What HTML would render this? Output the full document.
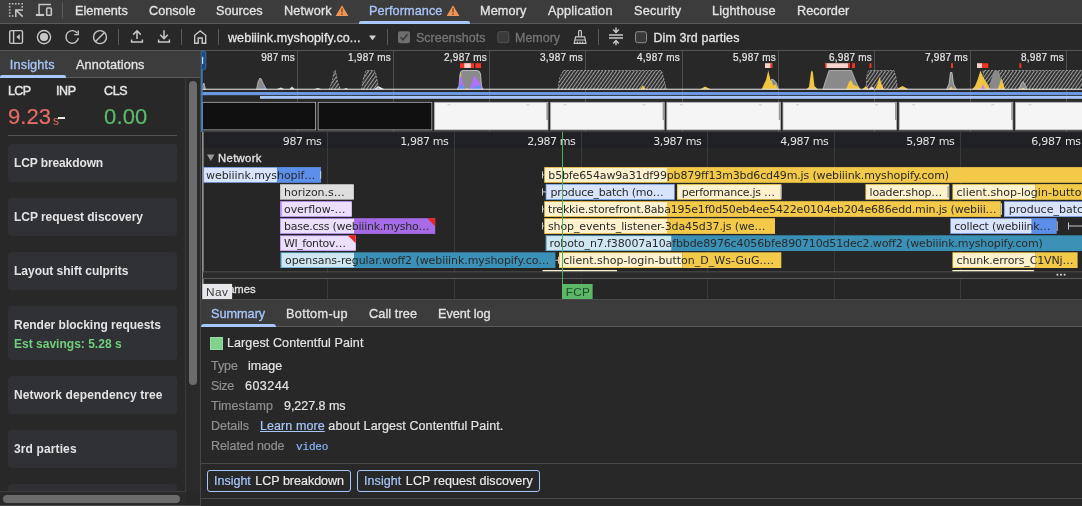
<!DOCTYPE html>
<html><head><meta charset="utf-8"><title>DevTools</title>
<style>
*{box-sizing:border-box;margin:0;padding:0}
html,body{width:1082px;height:506px;overflow:hidden;background:#282828;}
body{position:relative;font-family:"Liberation Sans","DejaVu Sans",sans-serif;font-size:12px;color:#e3e3e3;}
.abs{position:absolute}
.t{position:absolute;white-space:nowrap;line-height:14px}
#tabbar{left:0;top:0;width:1082px;height:24px;background:#3c3c3c;border-bottom:1px solid #5a5a5a}
#tabbar .t{top:4px;font-size:12.7px;font-weight:400;color:#e3e3e3;-webkit-text-stroke:0.3px currentColor}
#toolbar .t,#sidetabs .t{-webkit-text-stroke:0.3px currentColor}
#toolbar{left:0;top:24px;width:1082px;height:27px;background:#282828;border-bottom:1px solid #555}
#sidetabs{left:0;top:51px;width:200px;height:27px;background:#3c3c3c;border-bottom:1px solid #5a5a5a}
#side{left:0;top:78px;width:200px;height:428px;background:#282828;overflow:hidden}
.card{position:absolute;left:8px;width:169px;background:#303134;border-radius:4px}
.card .t{left:6px;font-weight:700;font-size:12px;color:#e3e3e6}
.m{-webkit-text-stroke:0.3px currentColor}
.g{color:#8f8f8f;font-size:12.5px}
.btn{position:absolute;top:143px;height:22px;border:1px solid #a8c7fa;border-radius:3px;font-size:12.5px;line-height:20px;padding-left:6px;white-space:nowrap;color:#e8e8e8;-webkit-text-stroke:0.2px currentColor}
#det .t{-webkit-text-stroke:0.2px currentColor}
.sep{position:absolute;width:1px;background:#5a5a5a}
svg{position:absolute;overflow:visible}
</style></head><body><div id="root" style="position:absolute;left:0;top:0;width:1082px;height:506px;will-change:transform">

<!-- TOP TAB BAR -->
<div id="tabbar" class="abs">
  <div class="t" style="letter-spacing:-0.024px;left:75px">Elements</div>
  <div class="t" style="letter-spacing:-0.009px;left:149px">Console</div>
  <div class="t" style="letter-spacing:0.008px;left:216px">Sources</div>
  <div class="t" style="letter-spacing:0.196px;left:284px">Network</div>
  <div class="t" style="letter-spacing:0.078px;left:369px;color:#a8c7fa">Performance</div>
  <div class="t" style="letter-spacing:0.112px;left:480px">Memory</div>
  <div class="t" style="letter-spacing:0.238px;left:548px">Application</div>
  <div class="t" style="letter-spacing:0.182px;left:634px">Security</div>
  <div class="t" style="letter-spacing:0.151px;left:712px">Lighthouse</div>
  <div class="t" style="letter-spacing:0.002px;left:797px">Recorder</div>

  <svg width="60" height="24" viewBox="0 0 60 24" style="left:0;top:0" fill="none" stroke="#c7c7c7">
    <rect x="8.9" y="3.05" width="1.55" height="1.5" fill="#c7c7c7" stroke="none"/><rect x="11.9" y="3.05" width="1.55" height="1.5" fill="#c7c7c7" stroke="none"/><rect x="15.0" y="3.05" width="1.55" height="1.5" fill="#c7c7c7" stroke="none"/><rect x="18.0" y="3.05" width="1.55" height="1.5" fill="#c7c7c7" stroke="none"/><rect x="21.4" y="3.05" width="1.55" height="1.5" fill="#c7c7c7" stroke="none"/><rect x="8.9" y="6.1" width="1.55" height="1.5" fill="#c7c7c7" stroke="none"/><rect x="8.9" y="9.15" width="1.55" height="1.5" fill="#c7c7c7" stroke="none"/><rect x="8.9" y="12.2" width="1.55" height="1.5" fill="#c7c7c7" stroke="none"/><rect x="8.9" y="15.25" width="1.55" height="1.5" fill="#c7c7c7" stroke="none"/><rect x="21.4" y="6.1" width="1.55" height="1.5" fill="#c7c7c7" stroke="none"/><rect x="11.9" y="15.25" width="1.55" height="1.5" fill="#c7c7c7" stroke="none"/>
    <path d="M22.6,16.6 L16,10 M15.8,16.9 V9.9 H23" stroke-width="1.5"/>
    <path d="M39.1,14 V4.6 H50.9" stroke-width="1.5"/>
    <path d="M35.9,15 H44.1" stroke-width="2.1"/>
    <rect x="46.7" y="8" width="4.6" height="7.3" rx="0.9" stroke-width="1.6"/>
  </svg>
  <svg width="30" height="24" viewBox="330 0 30 24" style="left:330px;top:0"><path d="M342,5.3 L348.4,16.1 H335.6Z" fill="#ee9657"/><path d="M342,8.3 V12.6 M342,13.6 V15" stroke="#6b3c18" stroke-width="1.2"/></svg>
  <svg width="30" height="24" viewBox="441.5 0 30 24" style="left:440.8px;top:0"><path d="M453.5,5.3 L459.9,16.1 H447.1Z" fill="#ee9657"/><path d="M453.5,8.3 V12.6 M453.5,13.6 V15" stroke="#6b3c18" stroke-width="1.2"/></svg>
  <div class="sep" style="left:62px;top:2px;height:16px"></div>
  <div class="abs" style="left:359px;top:21px;width:111px;height:3px;background:#a8c7fa;border-radius:2px 2px 0 0"></div>
</div>

<!-- TOOLBAR -->
<div id="toolbar" class="abs">
  <svg width="1082" height="27" viewBox="0 24 1082 27" style="left:0;top:0" fill="none" stroke="#c7c7c7" stroke-width="1.4">
    <rect x="9.7" y="30.6" width="12.8" height="12.8" rx="1.3"/>
    <path d="M13.6,30.6 V43.4"/>
    <path d="M19.8,34 V40 L16.4,37Z" fill="#c7c7c7" stroke="none"/>
    <circle cx="44" cy="37.1" r="6.6"/>
    <circle cx="44" cy="37.1" r="4.1" fill="#c7c7c7" stroke="none"/>
    <path d="M77.3,33.2 A6.3,6.3 0 1 0 78.4,38.2" />
    <path d="M78.2,30.6 V34.6 H74.2" />
    <circle cx="100" cy="37.1" r="6.5"/>
    <path d="M95.5,41.6 L104.5,32.6"/>
    <path d="M137,39 V31 M133.2,34.6 L137,30.8 L140.8,34.6" stroke-width="1.5"/>
    <path d="M131.6,39.6 V42 H142.4 V39.6" stroke-width="1.5"/>
    <path d="M164,30.3 V38.3 M160.2,34.8 L164,38.6 L167.8,34.8" stroke-width="1.5"/>
    <path d="M158.6,39.6 V42 H169.4 V39.6" stroke-width="1.5"/>
    <path d="M194.7,43.3 V35.3 L200.2,30.9 L205.7,35.3 V43.3 H202.2 V38 H198.2 V43.3Z" stroke-width="1.4" stroke-linejoin="miter"/>
    <path d="M369,35.5 H376 L372.5,40.2Z" fill="#d0d0d0" stroke="none"/>
    <rect x="398" y="31.2" width="12" height="12" rx="2" fill="#6e6e6e" stroke="none"/>
    <path d="M400.6,37.3 L403,39.8 L407.6,34.2" stroke="#3a3a3a" stroke-width="1.6"/>
    <rect x="497.8" y="31.7" width="11" height="11" rx="2" fill="#3a3a3a" stroke="#555" stroke-width="1"/>
    <rect x="635.5" y="31.7" width="11" height="11" rx="2" fill="#3a3a3a" stroke="#8e8e8e" stroke-width="1"/>
    <path d="M578.6,36.8 V31.6 Q578.6,30.4 580,30.4 Q581.4,30.4 581.4,31.6 V36.8" stroke-width="1.2"/>
    <path d="M575.6,36.8 H584.6 L586,43.4 H574.2Z" stroke-width="1.2"/>
    <path d="M575,40 H585.2 M577.4,43 V41.6 M580,43 V41.6 M582.6,43 V41.6" stroke-width="1.1"/>
    <path d="M609,35.1 H623 M609,38 H623" stroke-width="1.5"/>
    <path d="M616,27.6 V32.2 M613.2,29.6 L616,32.4 L618.8,29.6" stroke-width="1.4"/>
    <path d="M616,45.2 V40.8 M613.2,43.4 L616,40.6 L618.8,43.4" stroke-width="1.4"/>
  </svg>

  <div class="sep" style="left:118px;top:5px;height:16px"></div>
  <div class="sep" style="left:181px;top:5px;height:16px"></div>
  <div class="sep" style="left:218px;top:5px;height:16px"></div>
  <div class="sep" style="left:387px;top:5px;height:16px"></div>
  <div class="sep" style="left:598px;top:5px;height:16px"></div>
  <div class="t" style="letter-spacing:0.089px;left:228px;top:7px;font-size:12.5px">webiiink.myshopify.co...</div>
  <div class="t" style="letter-spacing:-0.008px;left:416px;top:7px;font-size:12.5px;color:#757575">Screenshots</div>
  <div class="t" style="letter-spacing:-0.026px;left:515px;top:7px;font-size:12.5px;color:#757575">Memory</div>
  <div class="t" style="letter-spacing:0.083px;left:653.5px;top:7px;font-size:12.5px">Dim 3rd parties</div>
</div>

<!-- SIDEBAR TABS -->
<div id="sidetabs" class="abs">
  <div class="t" style="letter-spacing:0.146px;left:9.8px;top:7px;font-size:12.7px;color:#a8c7fa">Insights</div>
  <div class="t" style="letter-spacing:0.144px;left:76px;top:7px;font-size:12.7px">Annotations</div>
  <div class="abs" style="left:0;top:24px;width:66px;height:3px;background:#a8c7fa;border-radius:2px 2px 0 0"></div>
</div>

<!-- SIDEBAR -->
<div id="side" class="abs">
  <div class="t" style="letter-spacing:-0.676px;left:8px;top:6px;font-size:12.5px;-webkit-text-stroke:0.45px currentColor">LCP</div>
  <div class="t" style="letter-spacing:-0.348px;left:56px;top:6px;font-size:12.5px;-webkit-text-stroke:0.45px currentColor">INP</div>
  <div class="t" style="letter-spacing:-0.376px;left:104px;top:6px;font-size:12.5px;-webkit-text-stroke:0.45px currentColor">CLS</div>
  <div class="t" style="letter-spacing:0.018px;left:8px;top:27px;font-size:22px;line-height:24px;color:#e56d66;-webkit-text-stroke:0.2px #e56d66">9.23</div>
  <div class="t" style="left:53px;top:36px;font-size:12px;color:#e56d66">s</div>
  <div class="abs" style="left:57.7px;top:38.8px;width:7.3px;height:2.3px;background:#e8e8e8"></div>
  <div class="t" style="letter-spacing:0.143px;left:104px;top:27px;font-size:22px;line-height:24px;color:#5bba6c;-webkit-text-stroke:0.2px #5bba6c">0.00</div>
  <div class="abs" style="left:8px;top:57px;width:169px;height:1px;background:#525252"></div>
  <div class="card" style="top:66px;height:38px"><div class="t" style="letter-spacing:-0.105px;top:12px">LCP breakdown</div></div>
  <div class="card" style="top:120px;height:38px"><div class="t" style="letter-spacing:-0.040px;top:12px">LCP request discovery</div></div>
  <div class="card" style="top:174px;height:38px"><div class="t" style="letter-spacing:-0.009px;top:12px">Layout shift culprits</div></div>
  <div class="card" style="top:228px;height:54px"><div class="t" style="letter-spacing:-0.016px;top:12px">Render blocking requests</div><div class="t" style="letter-spacing:0.011px;top:31px;color:#6fcf7c;font-size:12px">Est savings: 5.28 s</div></div>
  <div class="card" style="top:298px;height:38px"><div class="t" style="letter-spacing:0.111px;top:12px">Network dependency tree</div></div>
  <div class="card" style="top:352px;height:38px"><div class="t" style="letter-spacing:0.122px;top:12px">3rd parties</div></div>
  <div class="card" style="top:406px;height:38px"></div>
  <!-- vertical scrollbar -->
  <div class="abs" style="left:185.3px;top:0;width:14.7px;height:413px;background:#2a2a2a;border-left:1px solid #3a3a3a"></div>
  <div class="abs" style="left:189.2px;top:3px;width:7.6px;height:303.5px;background:#6b6b6b;border-radius:4px"></div>
  <!-- horizontal scrollbar -->
  <div class="abs" style="left:0;top:413px;width:186px;height:15px;background:#2a2a2a;border-top:1px solid #3d3d3d"></div>
  <div class="abs" style="left:0;top:427px;width:200px;height:1px;background:#454545"></div>
  <div class="abs" style="left:3px;top:417px;width:177px;height:8px;background:#6b6b6b;border-radius:4px"></div>
</div>
<!-- MAIN -->
<div id="main" class="abs" style="left:0;top:0;width:1082px;height:506px;pointer-events:none">
<svg width="1082" height="506" viewBox="0 0 1082 506" style="left:0;top:0">
<defs><pattern id="hatch" width="2.9" height="4" patternUnits="userSpaceOnUse" patternTransform="rotate(35)"><rect width="2.9" height="4" fill="#2d2d2d"/><rect width="1.05" height="4" fill="#9c9c9c"/></pattern></defs>
<rect x="297.0" y="51" width="1" height="81" fill="#505050"/>
<rect x="393.0" y="51" width="1" height="81" fill="#505050"/>
<rect x="489.0" y="51" width="1" height="81" fill="#505050"/>
<rect x="585.0" y="51" width="1" height="81" fill="#505050"/>
<rect x="682.0" y="51" width="1" height="81" fill="#505050"/>
<rect x="778.0" y="51" width="1" height="81" fill="#505050"/>
<rect x="874.0" y="51" width="1" height="81" fill="#505050"/>
<rect x="970.0" y="51" width="1" height="81" fill="#505050"/>
<rect x="1066.0" y="51" width="1" height="81" fill="#505050"/>
<text x="261.3" y="60.8" font-size="10" fill="#e6e6e6" stroke="#e6e6e6" stroke-width="0.2" font-family="Liberation Sans, sans-serif" textLength="33.4" lengthAdjust="spacing">987 ms</text>
<text x="348.1" y="60.8" font-size="10" fill="#e6e6e6" stroke="#e6e6e6" stroke-width="0.2" font-family="Liberation Sans, sans-serif" textLength="42.6" lengthAdjust="spacing">1,987 ms</text>
<text x="444.1" y="60.8" font-size="10" fill="#e6e6e6" stroke="#e6e6e6" stroke-width="0.2" font-family="Liberation Sans, sans-serif" textLength="42.6" lengthAdjust="spacing">2,987 ms</text>
<text x="540.1" y="60.8" font-size="10" fill="#e6e6e6" stroke="#e6e6e6" stroke-width="0.2" font-family="Liberation Sans, sans-serif" textLength="42.6" lengthAdjust="spacing">3,987 ms</text>
<text x="637.1" y="60.8" font-size="10" fill="#e6e6e6" stroke="#e6e6e6" stroke-width="0.2" font-family="Liberation Sans, sans-serif" textLength="42.6" lengthAdjust="spacing">4,987 ms</text>
<text x="733.1" y="60.8" font-size="10" fill="#e6e6e6" stroke="#e6e6e6" stroke-width="0.2" font-family="Liberation Sans, sans-serif" textLength="42.6" lengthAdjust="spacing">5,987 ms</text>
<text x="829.1" y="60.8" font-size="10" fill="#e6e6e6" stroke="#e6e6e6" stroke-width="0.2" font-family="Liberation Sans, sans-serif" textLength="42.6" lengthAdjust="spacing">6,987 ms</text>
<text x="925.1" y="60.8" font-size="10" fill="#e6e6e6" stroke="#e6e6e6" stroke-width="0.2" font-family="Liberation Sans, sans-serif" textLength="42.6" lengthAdjust="spacing">7,987 ms</text>
<text x="1021.1" y="60.8" font-size="10" fill="#e6e6e6" stroke="#e6e6e6" stroke-width="0.2" font-family="Liberation Sans, sans-serif" textLength="42.6" lengthAdjust="spacing">8,987 ms</text>
<path d="M329.0,89.5 L332.0,82.0 L334.3,70.5 L335.5,70.5 L337.5,82.0 L340.5,89.5Z" fill="url(#hatch)" stroke="#c8c8c8" stroke-width="0.6" stroke-dasharray="2 1.4"/>
<path d="M361.5,89.5 L363.5,78.0 L366.0,70.5 L374.5,70.5 L376.5,76.0 L378.5,89.5Z" fill="url(#hatch)" stroke="#c8c8c8" stroke-width="0.6" stroke-dasharray="2 1.4"/>
<path d="M558.0,89.5 L559.5,78.0 L563.5,70.5 L661.5,70.5 L664.0,80.0 L666.5,89.5Z" fill="url(#hatch)" stroke="#c8c8c8" stroke-width="0.6" stroke-dasharray="2 1.4"/>
<path d="M866.0,89.5 L866.8,76.0 L868.5,70.5 L894.0,70.5 L896.0,78.0 L897.5,89.5Z" fill="url(#hatch)" stroke="#c8c8c8" stroke-width="0.6" stroke-dasharray="2 1.4"/>
<path d="M983.0,89.5 L983.0,70.5 L1083.0,70.5 L1083.0,89.5Z" fill="url(#hatch)" stroke="#c8c8c8" stroke-width="0.6" stroke-dasharray="2 1.4"/>
<path d="M202.0,89.5 L203.0,84.0 L204.0,83.0 L205.5,89.5Z" fill="#8a8a8a" stroke="#ddd" stroke-width="0.6"/>
<path d="M256.5,89.5 L258.0,82.0 L259.5,78.5 L261.0,78.5 L263.0,83.0 L266.5,89.5Z" fill="#8a8a8a" stroke="#ddd" stroke-width="0.6"/>
<path d="M262.5,89.5 L264.0,86.0 L265.5,89.5Z" fill="#5f93ee" />
<path d="M276.0,89.5 L281.0,87.6 L285.0,89.5Z" fill="#ddd" />
<path d="M289.0,89.5 L292.0,86.5 L295.0,89.5Z" fill="#ddd" />
<path d="M313.0,89.5 L318.0,88.0 L322.0,89.5Z" fill="#ddd" />
<path d="M343.0,89.5 L346.0,88.0 L349.0,89.5Z" fill="#ddd" />
<path d="M374.0,89.5 L378.0,86.0 L385.0,89.5Z" fill="#e8e8e8" />
<path d="M376.5,89.5 L378.0,87.0 L380.0,89.5Z" fill="#5f93ee" />
<path d="M457,89.5 L459,86 L460,74 Q460.3,70.5 463,70.5 L477,70.5 Q480,70.5 480.5,74 L481.5,86 L483,89.5Z" fill="#8a8a8a" stroke="#e0e0e0" stroke-width="0.7"/>
<path d="M458.5,89.5 L459.5,80.0 L460.5,73.0 L462.0,80.0 L463.5,84.0 L465.0,89.5Z" fill="#ad73f7" />
<path d="M460.0,76.0 L460.7,73.0 L461.5,77.0Z" fill="#f0c640" />
<path d="M458.5,89.5 L459.5,85.0 L461.5,84.5 L463.5,86.5 L465.0,89.5Z" fill="#5f93ee" />
<path d="M469.5,89.5 L471.5,84.0 L473.5,77.0 L475.0,76.0 L477.0,79.5 L479.0,81.0 L480.5,84.0 L482.0,89.5Z" fill="#ad73f7" />
<path d="M472.0,89.5 L474.0,87.0 L477.0,85.5 L480.0,86.0 L482.0,89.5Z" fill="#5f93ee" />
<path d="M465.0,89.5 L467.0,88.0 L469.0,89.5Z" fill="#f0c640" />
<path d="M640.0,89.5 L643.0,85.5 L646.0,89.5Z" fill="#f0c640" />
<path d="M700.0,89.5 L705.0,86.5 L711.0,89.5Z" fill="#f0c640" />
<path d="M770.0,89.5 L771.5,79.0 L774.0,80.0 L776.5,83.0 L778.5,89.5Z" fill="#8a8a8a" stroke="#ddd" stroke-width="0.6"/>
<path d="M761.5,89.5 L764.0,84.0 L766.0,80.0 L768.3,70.5 L770.5,80.0 L772.0,82.0 L773.5,86.0 L775.5,84.0 L778.0,89.5Z" fill="#f0c640" />
<path d="M806.0,89.5 L809.0,87.0 L811.0,72.0 L811.8,70.5 L812.8,72.0 L814.5,86.0 L818.0,89.5Z" fill="#f0c640" />
<path d="M823,89.5 L824.5,84 L829,70.5 L851.5,70.5 L856,82 L860,89.5Z" fill="#8a8a8a" stroke="#ddd" stroke-width="0.6"/>
<path d="M846.0,89.5 L849.0,82.0 L851.0,80.0 L853.5,85.0 L857.0,86.0 L861.0,89.5Z" fill="#f0c640" />
<path d="M862.0,89.5 L866.0,86.0 L869.0,89.5Z" fill="#f0c640" />
<path d="M875.0,89.5 L877.5,84.0 L879.5,77.0 L881.5,84.0 L884.0,89.5Z" fill="#f0c640" />
<path d="M868.0,89.5 L872.0,86.5 L875.0,89.5Z" fill="#ddd" />
<path d="M896.0,89.5 L902.5,86.0 L909.0,89.5Z" fill="#f0c640" />
<path d="M946.5,89.5 L949.0,84.0 L950.5,72.5 L952.0,72.5 L953.5,84.0 L956.5,89.5Z" fill="#8a8a8a" stroke="#e0e0e0" stroke-width="0.7"/>
<path d="M948.5,89.5 L951.0,86.5 L953.5,89.5Z" fill="#f0c640" />
<path d="M989.0,89.5 L991.0,80.0 L994.0,71.0 L999.0,71.0 L1001.0,80.0 L1003.5,89.5Z" fill="#8a8a8a" />
<path d="M972.0,89.5 L975.0,86.0 L977.5,80.0 L980.5,70.5 L983.0,77.0 L985.0,80.0 L987.5,84.0 L990.0,89.5Z" fill="#f0c640" />
<path d="M980.5,89.5 L983.0,84.5 L985.5,89.5Z" fill="#c47df5" />
<path d="M997.5,89.5 L1000.0,83.0 L1001.5,78.0 L1003.0,83.0 L1005.0,89.5Z" fill="#f0c640" />
<path d="M1019.0,89.5 L1021.5,83.0 L1023.0,81.5 L1024.5,84.0 L1027.0,89.5Z" fill="#8a8a8a" stroke="#ddd" stroke-width="0.6"/>
<path d="M1020.5,89.5 L1023.0,87.5 L1025.5,89.5Z" fill="#f0c640" />
<rect x="202" y="88.7" width="880" height="1.1" fill="#dcdcdc"/>
<rect x="460" y="63.2" width="14.0" height="4.8" fill="#ee3524"/>
<rect x="464.3" y="63.2" width="6.5" height="4.8" fill="#f9d2d0"/>
<rect x="475.3" y="63.2" width="5.7" height="4.8" fill="#ee3524"/>
<rect x="765" y="63.2" width="7.2" height="4.8" fill="#f9d2d0"/>
<rect x="770.3" y="63.2" width="1.9" height="4.8" fill="#ee3524"/>
<rect x="825" y="63.2" width="25.0" height="4.8" fill="#f9d2d0"/>
<rect x="825" y="63.2" width="1.5" height="4.8" fill="#ee3524"/>
<rect x="848" y="63.2" width="2.0" height="4.8" fill="#ee3524"/>
<rect x="852" y="63.2" width="3.0" height="4.8" fill="#ee3524"/>
<rect x="869.5" y="63.2" width="2.0" height="4.8" fill="#ee3524"/>
<rect x="951" y="63.2" width="2.0" height="4.8" fill="#ee3524"/>
<rect x="977" y="63.2" width="5.0" height="4.8" fill="#f9d2d0"/>
<rect x="982" y="63.2" width="6.3" height="4.8" fill="#ee3524"/>
<rect x="1019.3" y="63.2" width="2.0" height="4.8" fill="#ee3524"/>
<rect x="202" y="92" width="880" height="3.2" fill="#6b98e0"/>
<rect x="260" y="96" width="822" height="2.8" fill="#a8c7fa"/>
<rect x="202.5" y="102.3" width="113.1" height="27.6" fill="#101010" stroke="#b0b0b0" stroke-width="0.8"/>
<rect x="318.2" y="102.3" width="113.6" height="27.6" fill="#101010" stroke="#b0b0b0" stroke-width="0.8"/>
<rect x="434.4" y="102.3" width="113.6" height="27.6" fill="#f5f5f5" stroke="#b0b0b0" stroke-width="0.8"/>
<rect x="447.4" y="104.5" width="3" height="0.7" fill="#bbb"/>
<rect x="526.4" y="104.5" width="3" height="0.7" fill="#bbb"/>
<rect x="546.4" y="103" width="1.6" height="17" fill="#999"/>
<rect x="550.6" y="102.3" width="113.6" height="27.6" fill="#f5f5f5" stroke="#b0b0b0" stroke-width="0.8"/>
<rect x="563.6" y="104.5" width="3" height="0.7" fill="#bbb"/>
<rect x="642.6" y="104.5" width="3" height="0.7" fill="#bbb"/>
<rect x="662.6" y="103" width="1.6" height="17" fill="#999"/>
<rect x="666.8" y="102.3" width="113.6" height="27.6" fill="#f5f5f5" stroke="#b0b0b0" stroke-width="0.8"/>
<rect x="679.8" y="104.5" width="3" height="0.7" fill="#bbb"/>
<rect x="758.8" y="104.5" width="3" height="0.7" fill="#bbb"/>
<rect x="778.8" y="103" width="1.6" height="17" fill="#999"/>
<rect x="783.0" y="102.3" width="113.6" height="27.6" fill="#f5f5f5" stroke="#b0b0b0" stroke-width="0.8"/>
<rect x="796.0" y="104.5" width="3" height="0.7" fill="#bbb"/>
<rect x="875.0" y="104.5" width="3" height="0.7" fill="#bbb"/>
<rect x="895.0" y="103" width="1.6" height="17" fill="#999"/>
<rect x="899.2" y="102.3" width="113.6" height="27.6" fill="#f5f5f5" stroke="#b0b0b0" stroke-width="0.8"/>
<rect x="912.2" y="104.5" width="3" height="0.7" fill="#bbb"/>
<rect x="991.2" y="104.5" width="3" height="0.7" fill="#bbb"/>
<rect x="1011.2" y="103" width="1.6" height="17" fill="#999"/>
<rect x="1015.4" y="102.3" width="113.6" height="27.6" fill="#f5f5f5" stroke="#b0b0b0" stroke-width="0.8"/>
<rect x="1028.4" y="104.5" width="3" height="0.7" fill="#bbb"/>
<rect x="1107.4" y="104.5" width="3" height="0.7" fill="#bbb"/>
<rect x="1127.4" y="103" width="1.6" height="17" fill="#999"/>
<rect x="1131.6" y="102.3" width="113.6" height="27.6" fill="#f5f5f5" stroke="#b0b0b0" stroke-width="0.8"/>
<rect x="1144.6" y="104.5" width="3" height="0.7" fill="#bbb"/>
<rect x="1223.6" y="104.5" width="3" height="0.7" fill="#bbb"/>
<rect x="1243.6" y="103" width="1.6" height="17" fill="#999"/>
<rect x="200" y="131.5" width="882" height="1" fill="#555"/>
<rect x="201.1" y="51" width="1.6" height="81" fill="#3b82c4"/>
<path d="M201.1,51 H203.8 Q205.8,51 205.8,53 V67.8 Q205.8,69.8 203.8,69.8 H201.1Z" fill="#1d4a82" stroke="#3b82c4" stroke-width="0.7"/>
<rect x="202" y="56.8" width="1.2" height="7.1" fill="#c9dcf5"/>
</svg>
<div class="abs" style="left:200px;top:132px;width:882px;height:168px;background:#262626"></div>
<div class="abs" style="left:203px;top:132.5px;width:879px;height:15.5px;background:#202124"></div>
<svg width="1082" height="506" viewBox="0 0 1082 506" style="left:0;top:0" font-family="DejaVu Sans, sans-serif" font-size="11">
<rect x="327.0" y="132" width="1" height="168" fill="#373a3e"/>
<rect x="454.0" y="132" width="1" height="168" fill="#373a3e"/>
<rect x="581.0" y="132" width="1" height="168" fill="#373a3e"/>
<rect x="707.0" y="132" width="1" height="168" fill="#373a3e"/>
<rect x="834.0" y="132" width="1" height="168" fill="#373a3e"/>
<rect x="960.0" y="132" width="1" height="168" fill="#373a3e"/>
<text x="282.8" y="145" font-size="11" fill="#e3e3e3" textLength="39" lengthAdjust="spacing">987 ms</text>
<text x="400.2" y="145" font-size="11" fill="#e3e3e3" textLength="48.6" lengthAdjust="spacing">1,987 ms</text>
<text x="527.2" y="145" font-size="11" fill="#e3e3e3" textLength="48.6" lengthAdjust="spacing">2,987 ms</text>
<text x="653.2" y="145" font-size="11" fill="#e3e3e3" textLength="48.6" lengthAdjust="spacing">3,987 ms</text>
<text x="780.2" y="145" font-size="11" fill="#e3e3e3" textLength="48.6" lengthAdjust="spacing">4,987 ms</text>
<text x="906.2" y="145" font-size="11" fill="#e3e3e3" textLength="48.6" lengthAdjust="spacing">5,987 ms</text>
<text x="1031.3" y="145" font-size="11" fill="#e3e3e3" textLength="49.8" lengthAdjust="spacing">6,987 ms</text>
<rect x="202.4" y="132" width="1" height="152" fill="#d8d8d8"/>
<path d="M207,154.5 L214.5,154.5 L210.75,161Z" fill="#9a9a9a"/>
<text x="218" y="162" font-size="11.3" fill="#e3e3e3" stroke="#e3e3e3" stroke-width="0.3" font-family="Liberation Sans, sans-serif" textLength="43.5" lengthAdjust="spacing">Network</text>
<rect x="203.3" y="167.1" width="73.9" height="15.7" fill="#7fa6ea"/>
<rect x="204.1" y="167.9" width="73.1" height="14.1" fill="#d7e4fb"/>
<rect x="277.2" y="167.1" width="43.8" height="15.7" fill="#5b8fe9"/>
<rect x="320.2" y="171.1" width="1" height="7.5" fill="#c9d6ee"/>
<text x="206.0" y="178.8" fill="#2a2a2a" textLength="109.3" lengthAdjust="spacing">webiiink.myshopif…</text>
<rect x="542.0" y="174.4" width="2.2" height="1" fill="#c8c8c8"/>
<rect x="542.0" y="171.4" width="1" height="7" fill="#c8c8c8"/>
<rect x="544.2" y="167.1" width="122.8" height="15.7" fill="#f3c94a"/>
<rect x="545.0" y="167.9" width="122.0" height="14.1" fill="#fdf2cd"/>
<rect x="667.0" y="167.1" width="415.0" height="15.7" fill="#f3c94a"/>
<text x="548.3" y="178.8" fill="#2a2a2a" textLength="400.7" lengthAdjust="spacing">b5bfe654aw9a31df99pb879ff13m3bd6cd49m.js (webiiink.myshopify.com)</text>
<rect x="280.0" y="184.1" width="73.7" height="15.7" fill="#bdbdbd"/>
<rect x="280.8" y="184.9" width="72.9" height="14.1" fill="#dedede"/>
<text x="284.0" y="195.8" fill="#2a2a2a" textLength="60.7" lengthAdjust="spacing">horizon.s…</text>
<rect x="542.0" y="191.4" width="4.0" height="1" fill="#c8c8c8"/>
<rect x="542.0" y="188.4" width="1" height="7" fill="#c8c8c8"/>
<rect x="545.8" y="184.1" width="129.0" height="15.7" fill="#7fa6ea"/>
<rect x="545.8" y="184.1" width="128.2" height="15.7" fill="#7fa6ea"/>
<rect x="546.6" y="184.9" width="127.4" height="14.1" fill="#d7e4fb"/>
<text x="550.5" y="195.8" fill="#2a2a2a" textLength="113.2" lengthAdjust="spacing">produce_batch (mo…</text>
<rect x="677.0" y="184.1" width="104.3" height="15.7" fill="#f3c94a"/>
<rect x="677.8" y="184.9" width="103.5" height="14.1" fill="#fdf2cd"/>
<rect x="780" y="185.1" width="1.3" height="13.7" fill="#c9c9c9"/>
<text x="681.7" y="195.8" fill="#2a2a2a" textLength="93.3" lengthAdjust="spacing">performance.js …</text>
<rect x="865.4" y="184.1" width="83.8" height="15.7" fill="#f3c94a"/>
<rect x="866.2" y="184.9" width="83.0" height="14.1" fill="#fdf2cd"/>
<rect x="947.5" y="186.1" width="1.2" height="11.7" fill="#9a9a9a"/>
<text x="869.6" y="195.8" fill="#2a2a2a" textLength="72.7" lengthAdjust="spacing">loader.shop…</text>
<rect x="952.4" y="184.1" width="83.1" height="15.7" fill="#f3c94a"/>
<rect x="953.2" y="184.9" width="82.3" height="14.1" fill="#fdf2cd"/>
<rect x="1035.5" y="184.1" width="46.5" height="15.7" fill="#f3c94a"/>
<text x="956.5" y="195.8" fill="#2a2a2a" textLength="131.9" lengthAdjust="spacing">client.shop-login-button</text>
<rect x="280.0" y="201.2" width="71.6" height="15.7" fill="#b48bea"/>
<rect x="281.0" y="201.2" width="70.6" height="15.7" fill="#b992ee"/>
<rect x="281.8" y="202.0" width="69.8" height="14.1" fill="#ebdffb"/>
<text x="284.0" y="212.9" fill="#2a2a2a" textLength="61.5" lengthAdjust="spacing">overflow-…</text>
<rect x="542.0" y="208.5" width="2.2" height="1" fill="#c8c8c8"/>
<rect x="542.0" y="205.5" width="1" height="7" fill="#c8c8c8"/>
<rect x="544.2" y="201.2" width="122.8" height="15.7" fill="#f3c94a"/>
<rect x="545.0" y="202.0" width="122.0" height="14.1" fill="#fdf2cd"/>
<rect x="667.0" y="201.2" width="333.8" height="15.7" fill="#f3c94a"/>
<text x="548.0" y="212.9" fill="#2a2a2a" textLength="448.6" lengthAdjust="spacing">trekkie.storefront.8aba195e1f0d50eb4ee5422e0104eb204e686edd.min.js (webiii…</text>
<rect x="1000.8" y="203.2" width="1.2" height="11.7" fill="#c9c9c9"/>
<rect x="1004.0" y="201.2" width="79.0" height="15.7" fill="#7fa6ea"/>
<rect x="1004.8" y="202.0" width="78.2" height="14.1" fill="#d7e4fb"/>
<text x="1008.7" y="212.9" fill="#2a2a2a" textLength="81.3" lengthAdjust="spacing">produce_batch</text>
<rect x="280.0" y="218.2" width="74.0" height="15.7" fill="#b992ee"/>
<rect x="280.8" y="219.0" width="73.2" height="14.1" fill="#ebdffb"/>
<rect x="354.0" y="218.2" width="81.2" height="15.7" fill="#a66be6"/>
<path d="M427.2,218.2 L435.2,218.2 L435.2,226.2Z" fill="#e8251f"/>
<text x="284.0" y="229.9" fill="#2a2a2a" textLength="145.5" lengthAdjust="spacing">base.css (webiiink.mysho…</text>
<rect x="542.0" y="225.5" width="2.2" height="1" fill="#c8c8c8"/>
<rect x="542.0" y="222.5" width="1" height="7" fill="#c8c8c8"/>
<rect x="544.2" y="218.2" width="122.8" height="15.7" fill="#f3c94a"/>
<rect x="545.0" y="219.0" width="122.0" height="14.1" fill="#fdf2cd"/>
<rect x="667.0" y="218.2" width="108.0" height="15.7" fill="#f3c94a"/>
<text x="548.0" y="229.9" fill="#2a2a2a" textLength="217.5" lengthAdjust="spacing">shop_events_listener-3da45d37.js (we…</text>
<rect x="950.2" y="218.2" width="81.5" height="15.7" fill="#7fa6ea"/>
<rect x="951.0" y="219.0" width="80.7" height="14.1" fill="#d7e4fb"/>
<rect x="1031.7" y="218.2" width="25.0" height="15.7" fill="#5b8fe9"/>
<rect x="1056.7" y="221.2" width="1" height="9.7" fill="#c9c9c9"/>
<text x="954.3" y="229.9" fill="#2a2a2a" textLength="96.1" lengthAdjust="spacing">collect (webiiink…</text>
<rect x="1068.0" y="225.5" width="14.0" height="1" fill="#c8c8c8"/>
<rect x="1068.0" y="222.5" width="1" height="7" fill="#c8c8c8"/>
<rect x="280.0" y="235.3" width="75.7" height="15.7" fill="#b992ee"/>
<rect x="280.8" y="236.1" width="74.9" height="14.1" fill="#ebdffb"/>
<path d="M347.7,235.3 L355.7,235.3 L355.7,243.3Z" fill="#e8251f"/>
<text x="284.0" y="247.0" fill="#2a2a2a" textLength="61.9" lengthAdjust="spacing">WI_fontov…</text>
<rect x="545.8" y="235.3" width="125.8" height="15.7" fill="#62a9c9"/>
<rect x="546.6" y="236.1" width="125.0" height="14.1" fill="#cfe7f2"/>
<rect x="671.6" y="235.3" width="410.4" height="15.7" fill="#3b90b6"/>
<rect x="545.8" y="235.3" width="1" height="15.7" fill="#7fb8d2"/>
<text x="549.6" y="247.0" fill="#2a2a2a" textLength="493.2" lengthAdjust="spacing">roboto_n7.f38007a10afbbde8976c4056bfe890710d51dec2.woff2 (webiiink.myshopify.com)</text>
<rect x="280.7" y="252.3" width="73.3" height="15.7" fill="#62a9c9"/>
<rect x="281.5" y="253.1" width="72.5" height="14.1" fill="#cfe7f2"/>
<rect x="354.0" y="252.3" width="201.4" height="15.7" fill="#3b90b6"/>
<rect x="280.7" y="252.3" width="1" height="15.7" fill="#7fb8d2"/>
<text x="285.0" y="264.0" fill="#2a2a2a" textLength="264.3" lengthAdjust="spacing">opensans-regular.woff2 (webiiink.myshopify.co…</text>
<rect x="555.4" y="259.7" width="3.6" height="1" fill="#c8c8c8"/>
<rect x="558.0" y="256.7" width="1" height="7" fill="#c8c8c8"/>
<rect x="559.0" y="252.3" width="123.3" height="15.7" fill="#f3c94a"/>
<rect x="559.8" y="253.1" width="122.5" height="14.1" fill="#fdf2cd"/>
<rect x="682.3" y="252.3" width="99.0" height="15.7" fill="#f3c94a"/>
<text x="563.2" y="264.0" fill="#2a2a2a" textLength="210.8" lengthAdjust="spacing">client.shop-login-button_D_Ws-GuG.…</text>
<rect x="952.4" y="252.3" width="83.1" height="15.7" fill="#f3c94a"/>
<rect x="953.2" y="253.1" width="82.3" height="14.1" fill="#fdf2cd"/>
<rect x="1035.5" y="252.3" width="42.1" height="15.7" fill="#f3c94a"/>
<text x="956.5" y="264.0" fill="#2a2a2a" textLength="117.0" lengthAdjust="spacing">chunk.errors_C1VNj…</text>
<rect x="542.6" y="270" width="74.4" height="1.5" fill="#fdf2cd"/>
<rect x="952.4" y="270" width="81.6" height="1.5" fill="#fdf2cd"/>
<rect x="202" y="271.5" width="880" height="1" fill="#5a5a5a"/>
<rect x="203" y="272.5" width="879" height="5.5" fill="#2b2b2b"/>
<rect x="202" y="278" width="880" height="1" fill="#5a5a5a"/>
<rect x="1056.5" y="273.8" width="1.8" height="1.8" fill="#d0d0d0"/>
<rect x="1060.1" y="273.8" width="1.8" height="1.8" fill="#d0d0d0"/>
<rect x="1063.7" y="273.8" width="1.8" height="1.8" fill="#d0d0d0"/>
<text x="217.6" y="292.7" font-size="11.3" fill="#e3e3e3" stroke="#e3e3e3" stroke-width="0.3" font-family="Liberation Sans, sans-serif" textLength="38" lengthAdjust="spacing">Frames</text>
<rect x="202.2" y="283.9" width="29.9" height="15.3" fill="#e8e8ec"/>
<text x="206" y="295.8" font-size="11.8" fill="#3a3a3a" font-family="Liberation Sans, sans-serif" textLength="21.8" lengthAdjust="spacing">Nav</text>
<rect x="562" y="132" width="1" height="168" fill="#4fb05c"/>
<rect x="562" y="284" width="30.6" height="15.3" fill="#5cb867"/>
<text x="565.8" y="296" font-size="11.8" fill="#1f4a26" font-family="Liberation Sans, sans-serif" textLength="24" lengthAdjust="spacing">FCP</text>
</svg>
</div>
<!-- DETAILS PANE -->
<div class="abs" style="left:200px;top:299px;width:882px;height:1px;background:#4a4a4a"></div>
<div class="abs" style="left:200px;top:300px;width:882px;height:27px;background:#3c3c3c;border-bottom:1px solid #5a5a5a">
  <div class="t m" style="letter-spacing:-0.012px;left:11px;top:7px;font-size:12.7px;color:#a8c7fa">Summary</div>
  <div class="t m" style="letter-spacing:0.385px;left:86px;top:7px;font-size:12.7px">Bottom-up</div>
  <div class="t m" style="letter-spacing:0.094px;left:169px;top:7px;font-size:12.7px">Call tree</div>
  <div class="t m" style="letter-spacing:-0.034px;left:238px;top:7px;font-size:12.7px">Event log</div>
  <div class="abs" style="left:1.2px;top:24.2px;width:75px;height:2.8px;background:#a8c7fa;border-radius:3px 3px 0 0"></div>
</div>
<div id="det" class="abs" style="left:200px;top:327px;width:882px;height:179px;background:#282828">
  <div class="abs" style="left:9.6px;top:9.5px;width:13px;height:13px;background:#81d28e;border:1px solid #9ad9a3"></div>
  <div class="t" style="letter-spacing:0.099px;left:27px;top:9px;font-size:12.5px">Largest Contentful Paint</div>
  <div class="t g" style="letter-spacing:-0.052px;left:11px;top:32px">Type</div><div class="t" style="letter-spacing:0.031px;left:48px;top:32px;font-size:12.5px">image</div>
  <div class="t g" style="letter-spacing:-0.382px;left:11px;top:52px">Size</div><div class="t" style="letter-spacing:0.464px;left:45px;top:52px;font-size:12.5px">603244</div>
  <div class="t g" style="letter-spacing:0.071px;left:11px;top:72px">Timestamp</div><div class="t" style="letter-spacing:-0.034px;left:84px;top:72px;font-size:12.5px">9,227.8 ms</div>
  <div class="t g" style="letter-spacing:-0.046px;left:11px;top:92px">Details</div><div class="t" style="letter-spacing:0.085px;left:60px;top:92px;font-size:12.5px"><span style="color:#a8c7fa;text-decoration:underline">Learn more</span> about Largest Contentful Paint.</div>
  <div class="t g" style="letter-spacing:-0.081px;left:11px;top:112px">Related node</div><div class="t" style="letter-spacing:-0.163px;left:96px;top:113px;font-size:11px;color:#8ab4f8;font-family:'Liberation Mono','DejaVu Sans Mono',monospace">video</div>
  <div class="abs" style="left:0;top:136px;width:882px;height:1px;background:#4a4a4a"></div>
  <div class="btn" style="left:7px;width:144px"><span style="color:#a8c7fa;margin-right:1px">Insight</span> LCP breakdown</div>
  <div class="btn" style="left:157px;width:183px;letter-spacing:0.07px"><span style="color:#a8c7fa;margin-right:1px">Insight</span> LCP request discovery</div>
  <div class="abs" style="left:0;top:170.5px;width:882px;height:1px;background:#4a4a4a"></div>
</div>
<div class="abs" style="left:199.7px;top:70px;width:1.5px;height:436px;background:#464646"></div>
<div class="abs" style="left:199.7px;top:51px;width:1.4px;height:19px;background:#464646"></div>

</div></body></html>
